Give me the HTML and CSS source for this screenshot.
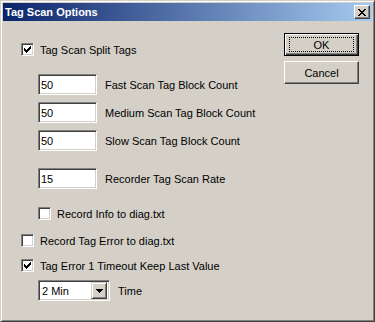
FILE: index.html
```html
<!DOCTYPE html>
<html lang="en">
<head>
<meta charset="UTF-8">
<meta name="viewport" content="width=device-width, initial-scale=1.0">
<title>Tag Scan Options</title>
<link rel="stylesheet" href="styles.css">
</head>
<body>

<div class="window">
  <div class="titlebar">
    <span class="title">Tag Scan Options</span>
    <span class="close">
      <svg width="8" height="7" viewBox="0 0 8 7" shape-rendering="crispEdges">
        <path d="M0 0h2v1h-2z M6 0h2v1h-2z M1 1h2v1h-2z M5 1h2v1h-2z M2 2h4v1h-4z M3 3h2v1h-2z M2 4h4v1h-4z M1 5h2v1h-2z M5 5h2v1h-2z M0 6h2v1h-2z M6 6h2v1h-2z" fill="#000"/>
      </svg>
    </span>
  </div>

  <div class="content">
    <div class="options">
      <div class="check-row first">
        <span class="check on"></span>
        <span class="label">Tag Scan Split Tags</span>
      </div>

      <div class="field-row r-fast">
        <span class="textbox">50</span>
        <span class="label">Fast Scan Tag Block Count</span>
      </div>
      <div class="field-row r-near">
        <span class="textbox">50</span>
        <span class="label">Medium Scan Tag Block Count</span>
      </div>
      <div class="field-row r-near">
        <span class="textbox">50</span>
        <span class="label">Slow Scan Tag Block Count</span>
      </div>
      <div class="field-row r-far">
        <span class="textbox">15</span>
        <span class="label">Recorder Tag Scan Rate</span>
      </div>

      <div class="check-row indent r-info">
        <span class="check"></span>
        <span class="label">Record Info to diag.txt</span>
      </div>
      <div class="check-row r-error">
        <span class="check"></span>
        <span class="label">Record Tag Error to diag.txt</span>
      </div>
      <div class="check-row r-keep">
        <span class="check on"></span>
        <span class="label">Tag Error 1 Timeout Keep Last Value</span>
      </div>

      <div class="field-row r-time">
        <span class="combo">
          <span class="combo-text">2 Min</span>
          <span class="combo-btn"></span>
        </span>
        <span class="label">Time</span>
      </div>
    </div>

    <div class="actions">
      <button class="btn default"><span class="focus">OK</span></button>
      <button class="btn">Cancel</button>
    </div>
  </div>
</div>

</body>
</html>
```

FILE: styles.css
```css
body {
  margin: 0;
  background-color: #d4d0c8;
  font-family: "Liberation Sans", Arial, sans-serif;
  font-size: 11px;
  color: #000;
}

.window {
  width: 375px;
  height: 322px;
  box-sizing: border-box;
  border: 1px solid;
  border-color: #d4d0c8 #404040 #404040 #d4d0c8;
  box-shadow: inset 1px 1px #fff, inset -1px -1px #808080;
  padding: 2px;
  background-color: #d4d0c8;
}

.titlebar {
  height: 18px;
  display: flex;
  align-items: center;
  justify-content: space-between;
  padding: 0 2px 0 2px;
  background: linear-gradient(to right, #0a246a, #a6caf0);
}

.title {
  color: #fff;
  font-weight: bold;
  font-size: 11px;
}

.close {
  width: 16px;
  height: 14px;
  box-sizing: border-box;
  display: flex;
  align-items: center;
  justify-content: center;
  background-color: #d4d0c8;
  border: 1px solid;
  border-color: #fff #404040 #404040 #fff;
  box-shadow: inset -1px -1px #808080;
}

.content {
  display: flex;
  justify-content: space-between;
  padding: 22px 13px 0 18px;
}

.options {
  display: flex;
  flex-direction: column;
}

.check-row {
  display: flex;
  align-items: center;
  height: 13px;
}

.check-row .label {
  margin-left: 6px;
}

.indent {
  margin-left: 17px;
}

.check {
  width: 13px;
  height: 13px;
  box-sizing: border-box;
  background-color: #fff;
  border: 1px solid;
  border-color: #808080 #fff #fff #808080;
  box-shadow: inset 1px 1px #404040, inset -1px -1px #d4d0c8;
}

.check.on {
  background: #fff url("data:image/svg+xml,%3Csvg xmlns='http://www.w3.org/2000/svg' width='7' height='7' shape-rendering='crispEdges'%3E%3Cpath d='M6 0h1v1h-1z M5 1h2v1h-2z M0 2h1v1h-1z M4 2h3v1h-3z M0 3h2v1h-2z M3 3h3v1h-3z M0 4h5v1h-5z M1 5h3v1h-3z M2 6h1v1h-1z'/%3E%3C/svg%3E") no-repeat 2px 2px;
}

.field-row {
  display: flex;
  align-items: center;
  height: 21px;
  margin-left: 17px;
}

.field-row .label {
  margin-left: 8px;
}

.r-fast { margin-top: 18px; }
.r-near { margin-top: 7px; }
.r-far { margin-top: 17px; }
.r-info { margin-top: 18px; }
.r-error { margin-top: 14px; margin-left: 0; }
.r-keep { margin-top: 12px; }
.r-time { margin-top: 8px; }

.textbox {
  width: 59px;
  height: 21px;
  box-sizing: border-box;
  padding: 0 2px;
  display: flex;
  align-items: center;
  background-color: #fff;
  border: 1px solid;
  border-color: #808080 #fff #fff #808080;
  box-shadow: inset 1px 1px #404040, inset -1px -1px #d4d0c8;
}

.combo {
  width: 72px;
  height: 21px;
  box-sizing: border-box;
  display: flex;
  align-items: center;
  justify-content: space-between;
  padding: 2px;
  background-color: #fff;
  border: 1px solid;
  border-color: #808080 #fff #fff #808080;
  box-shadow: inset 1px 1px #404040, inset -1px -1px #d4d0c8;
}

.combo-text {
  padding-left: 1px;
}

.combo-btn {
  width: 16px;
  height: 17px;
  box-sizing: border-box;
  background: #d4d0c8 url("data:image/svg+xml,%3Csvg xmlns='http://www.w3.org/2000/svg' width='7' height='4' shape-rendering='crispEdges'%3E%3Cpath d='M0 0h7v1h-7z M1 1h5v1h-5z M2 2h3v1h-3z M3 3h1v1h-1z'/%3E%3C/svg%3E") no-repeat center;
  border: 1px solid;
  border-color: #d4d0c8 #404040 #404040 #d4d0c8;
  box-shadow: inset 1px 1px #fff, inset -1px -1px #808080;
}

.actions {
  display: flex;
  flex-direction: column;
  gap: 5px;
  margin-top: -10px;
}

.btn {
  width: 75px;
  height: 23px;
  box-sizing: border-box;
  padding: 0;
  font-family: "Liberation Sans", Arial, sans-serif;
  font-size: 11px;
  color: #000;
  background-color: #d4d0c8;
  border: 1px solid;
  border-color: #fff #404040 #404040 #fff;
  box-shadow: inset -1px -1px #808080;
}

.btn.default {
  border: 1px solid #000;
  box-shadow: inset 1px 1px #fff, inset -1px -1px #404040, inset -2px -2px #808080;
  display: flex;
  align-items: center;
  justify-content: center;
}

.focus {
  width: 65px;
  height: 15px;
  box-sizing: border-box;
  border: 1px dotted #000;
  display: flex;
  align-items: center;
  justify-content: center;
}
```
